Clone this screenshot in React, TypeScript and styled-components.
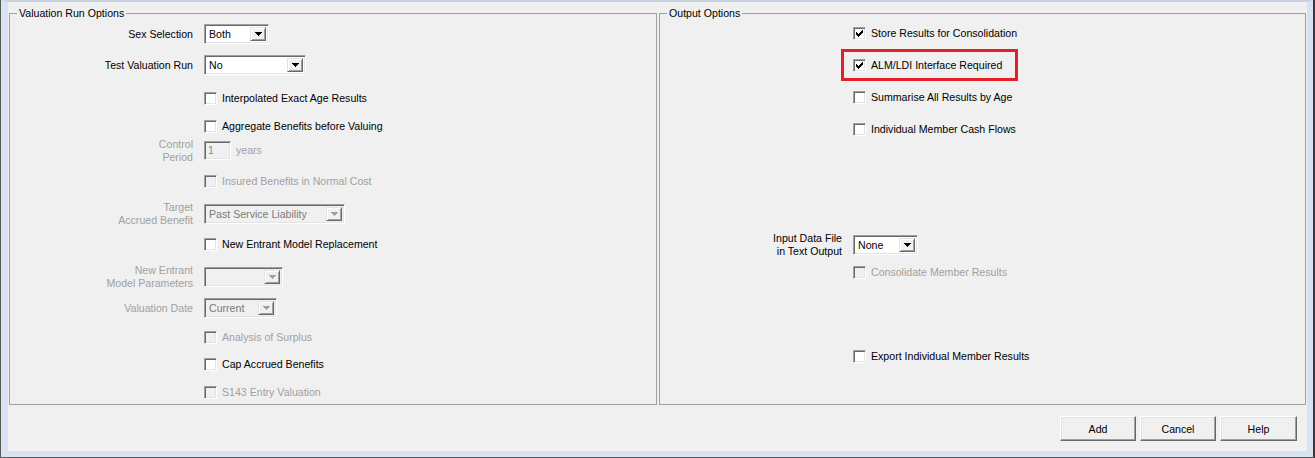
import React from "react";
import styled, { createGlobalStyle } from "styled-components";

const Global = createGlobalStyle`
  html, body { margin: 0; padding: 0; background: #f0f0f0; }
  body {
    font-family: "Liberation Sans", Arial, sans-serif;
    font-size: 10.6px;
    color: #000;
  }
  * { box-sizing: border-box; }
`;

const Window = styled.div`
  width: 1315px;
  height: 458px;
  display: flex;
  border-left: 1px solid #5a5a5a;
  border-right: 2px solid #3a3a3a;
  border-bottom: 1px solid #5a5a5a;
`;

const Frame = styled.div`
  flex: 1;
  display: flex;
  border-top: 2px solid #c6d2e2;
  border-left: 7px solid #d7e3f2;
  border-right: 6px solid #d7e3f2;
  border-bottom: 6px solid #d7e3f2;
`;

const Client = styled.div`
  flex: 1;
  display: flex;
  flex-direction: column;
  background: #f0f0f0;
  padding: 5px 1px 0 1px;
`;

const Groups = styled.div`
  display: flex;
  gap: 2px;
  height: 398px;
`;

const GroupBox = styled.fieldset<{ $w: number }>`
  margin: 0;
  padding: 0;
  min-width: 0;
  width: ${(p) => p.$w}px;
  height: 398px;
  border: 1px solid #a0a0a0;
`;

const Legend = styled.legend`
  margin-left: 7px;
  padding: 0 2px;
  line-height: 13px;
`;

const Body = styled.div`
  display: flex;
  flex-direction: column;
`;

const Row = styled.div<{ $mt: number; $lw: number; $gap: number }>`
  display: grid;
  grid-template-columns: ${(p) => p.$lw}px auto;
  column-gap: ${(p) => p.$gap}px;
  align-items: center;
  justify-items: start;
  height: 24px;
  margin-top: ${(p) => p.$mt}px;
`;

const Label = styled.div<{ $disabled?: boolean }>`
  justify-self: end;
  text-align: right;
  line-height: 12.5px;
  white-space: nowrap;
  color: ${(p) => (p.$disabled ? "#a0a0a0" : "#000")};
`;

const Control = styled.div`
  position: relative;
  display: flex;
  align-items: center;
  gap: 5px;
  grid-column: 2;
`;

const CheckText = styled.span<{ $disabled?: boolean }>`
  white-space: nowrap;
  line-height: 13px;
  color: ${(p) => (p.$disabled ? "#a0a0a0" : "#000")};
`;

const Box = styled.span<{ $disabled?: boolean }>`
  width: 13px;
  height: 13px;
  flex: none;
  display: flex;
  align-items: center;
  justify-content: center;
  background: ${(p) => (p.$disabled ? "#f0f0f0" : "#fff")};
  border-top: 1px solid #a0a0a0;
  border-left: 1px solid #a0a0a0;
  border-right: 1px solid #fff;
  border-bottom: 1px solid #fff;
  box-shadow: inset 1px 1px 0 #696969, inset -1px -1px 0 #e3e3e3;
`;

const Sunken = styled.div<{ $w: number; $h: number; $disabled?: boolean }>`
  width: ${(p) => p.$w}px;
  height: ${(p) => p.$h}px;
  display: flex;
  align-items: stretch;
  padding: 2px;
  background: ${(p) => (p.$disabled ? "#f0f0f0" : "#fff")};
  border-top: 1px solid #a0a0a0;
  border-left: 1px solid #a0a0a0;
  border-right: 1px solid #fff;
  border-bottom: 1px solid #fff;
  box-shadow: inset 1px 1px 0 #696969, inset -1px -1px 0 #e3e3e3;
`;

const ComboText = styled.span<{ $disabled?: boolean }>`
  flex: 1;
  display: flex;
  align-items: center;
  padding-left: 2px;
  white-space: nowrap;
  overflow: hidden;
  color: ${(p) => (p.$disabled ? "#7a7a7a" : "#000")};
`;

const DropButton = styled.span`
  width: 16px;
  flex: none;
  display: flex;
  align-items: center;
  justify-content: center;
  background: #f0f0f0;
  border-top: 1px solid #e3e3e3;
  border-left: 1px solid #e3e3e3;
  border-right: 1px solid #696969;
  border-bottom: 1px solid #696969;
  box-shadow: inset 1px 1px 0 #fff, inset -1px -1px 0 #a0a0a0;
`;

const InputText = styled.span<{ $disabled?: boolean }>`
  padding-left: 1px;
  line-height: 13px;
  color: ${(p) => (p.$disabled ? "#8a8a8a" : "#000")};
`;

const Highlight = styled.span`
  position: absolute;
  left: -12px;
  top: -10px;
  width: 177px;
  height: 32px;
  border: 3px solid #e3202a;
  pointer-events: none;
`;

const Footer = styled.div`
  display: flex;
  justify-content: flex-end;
  gap: 4px;
  padding: 11px 9px 0 0;
`;

const Button = styled.button<{ $w: number }>`
  width: ${(p) => p.$w}px;
  height: 25px;
  font: inherit;
  color: #000;
  background: #f0f0f0;
  padding: 0;
  border-top: 1px solid #fff;
  border-left: 1px solid #fff;
  border-right: 1px solid #696969;
  border-bottom: 1px solid #696969;
  box-shadow: inset -1px -1px 0 #a0a0a0, inset 1px 1px 0 #e3e3e3;
`;

const Arrow: React.FC<{ disabled?: boolean }> = ({ disabled }) => (
  <svg width="7" height="4" viewBox="0 0 7 4" shapeRendering="crispEdges">
    <path
      d="M0 0h7v1H0z M1 1h5v1H1z M2 2h3v1H2z M3 3h1v1H3z"
      fill={disabled ? "#a0a0a0" : "#000"}
    />
  </svg>
);

const Tick: React.FC = () => (
  <svg width="7" height="7" viewBox="0 0 7 7" shapeRendering="crispEdges">
    <path
      d="M6 0h1v1H6z M5 1h2v1H5z M0 2h1v1H0z M4 2h3v1H4z M0 3h2v1H0z M3 3h3v1H3z M0 4h5v1H0z M1 5h3v1H1z M2 6h1v1H2z"
      fill="#000"
    />
  </svg>
);

const Check: React.FC<{ label: string; checked?: boolean; disabled?: boolean; children?: React.ReactNode }> = ({
  label,
  checked,
  disabled,
  children,
}) => (
  <Control>
    {children}
    <Box $disabled={disabled}>{checked && <Tick />}</Box>
    <CheckText $disabled={disabled}>{label}</CheckText>
  </Control>
);

const Combo: React.FC<{ value: string; w: number; disabled?: boolean }> = ({ value, w, disabled }) => (
  <Control>
    <Sunken $w={w} $h={20} $disabled={disabled}>
      <ComboText $disabled={disabled}>{value}</ComboText>
      <DropButton>
        <Arrow disabled={disabled} />
      </DropButton>
    </Sunken>
  </Control>
);

const L = { lw: 183, gap: 11 };
const R = { lw: 182, gap: 11 };

export default function App() {
  return (
    <>
      <Global />
      <Window>
        <Frame>
          <Client>
            <Groups>
              <GroupBox $w={648}>
                <Legend>Valuation Run Options</Legend>
                <Body>
                  <Row $mt={2} $lw={L.lw} $gap={L.gap}>
                    <Label>Sex Selection</Label>
                    <Combo value="Both" w={65} />
                  </Row>
                  <Row $mt={7} $lw={L.lw} $gap={L.gap}>
                    <Label>Test Valuation Run</Label>
                    <Combo value="No" w={102} />
                  </Row>
                  <Row $mt={9} $lw={L.lw} $gap={L.gap}>
                    <Check label="Interpolated Exact Age Results" />
                  </Row>
                  <Row $mt={4} $lw={L.lw} $gap={L.gap}>
                    <Check label="Aggregate Benefits before Valuing" />
                  </Row>
                  <Row $mt={0} $lw={L.lw} $gap={L.gap}>
                    <Label $disabled>
                      Control
                      <br />
                      Period
                    </Label>
                    <Control>
                      <Sunken $w={27} $h={19} $disabled>
                        <InputText $disabled>1</InputText>
                      </Sunken>
                      <CheckText $disabled>years</CheckText>
                    </Control>
                  </Row>
                  <Row $mt={7} $lw={L.lw} $gap={L.gap}>
                    <Check label="Insured Benefits in Normal Cost" disabled />
                  </Row>
                  <Row $mt={8} $lw={L.lw} $gap={L.gap}>
                    <Label $disabled>
                      Target
                      <br />
                      Accrued Benefit
                    </Label>
                    <Combo value="Past Service Liability" w={141} disabled />
                  </Row>
                  <Row $mt={7} $lw={L.lw} $gap={L.gap}>
                    <Check label="New Entrant Model Replacement" />
                  </Row>
                  <Row $mt={8} $lw={L.lw} $gap={L.gap}>
                    <Label $disabled>
                      New Entrant
                      <br />
                      Model Parameters
                    </Label>
                    <Combo value="" w={79} disabled />
                  </Row>
                  <Row $mt={8} $lw={L.lw} $gap={L.gap}>
                    <Label $disabled>Valuation Date</Label>
                    <Combo value="Current" w={73} disabled />
                  </Row>
                  <Row $mt={5} $lw={L.lw} $gap={L.gap}>
                    <Check label="Analysis of Surplus" disabled />
                  </Row>
                  <Row $mt={3} $lw={L.lw} $gap={L.gap}>
                    <Check label="Cap Accrued Benefits" />
                  </Row>
                  <Row $mt={4} $lw={L.lw} $gap={L.gap}>
                    <Check label="S143 Entry Valuation" disabled />
                  </Row>
                </Body>
              </GroupBox>
              <GroupBox $w={647}>
                <Legend>Output Options</Legend>
                <Body>
                  <Row $mt={1} $lw={R.lw} $gap={R.gap}>
                    <Check label="Store Results for Consolidation" checked />
                  </Row>
                  <Row $mt={8} $lw={R.lw} $gap={R.gap}>
                    <Check label="ALM/LDI Interface Required" checked>
                      <Highlight />
                    </Check>
                  </Row>
                  <Row $mt={8} $lw={R.lw} $gap={R.gap}>
                    <Check label="Summarise All Results by Age" />
                  </Row>
                  <Row $mt={8} $lw={R.lw} $gap={R.gap}>
                    <Check label="Individual Member Cash Flows" />
                  </Row>
                  <Row $mt={91} $lw={R.lw} $gap={R.gap}>
                    <Label>
                      Input Data File
                      <br />
                      in Text Output
                    </Label>
                    <Combo value="None" w={65} />
                  </Row>
                  <Row $mt={4} $lw={R.lw} $gap={R.gap}>
                    <Check label="Consolidate Member Results" disabled />
                  </Row>
                  <Row $mt={60} $lw={R.lw} $gap={R.gap}>
                    <Check label="Export Individual Member Results" />
                  </Row>
                </Body>
              </GroupBox>
            </Groups>
            <Footer>
              <Button $w={76}>Add</Button>
              <Button $w={76}>Cancel</Button>
              <Button $w={77}>Help</Button>
            </Footer>
          </Client>
        </Frame>
      </Window>
    </>
  );
}
